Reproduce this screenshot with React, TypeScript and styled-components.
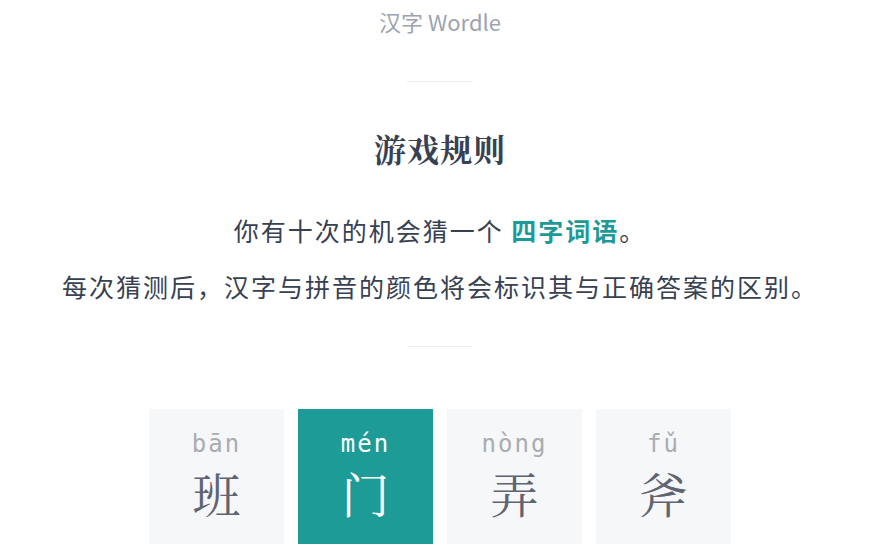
import { createGlobalStyle, styled } from "styled-components";

const GlobalStyle = createGlobalStyle`
  html, body {
    margin: 0;
    padding: 0;
    background: #ffffff;
  }
  body {
    font-family: "Noto Sans", "Noto Sans CJK SC", sans-serif;
  }
`;

const tiles = [
  { pinyin: "bān", hanzi: "班", exact: false },
  { pinyin: "mén", hanzi: "门", exact: true },
  { pinyin: "nòng", hanzi: "弄", exact: false },
  { pinyin: "fǔ", hanzi: "斧", exact: false },
];

export default function App() {
  return (
    <Page>
      <GlobalStyle />
      <Header>汉字 Wordle</Header>
      <Divider />
      <Title>游戏规则</Title>
      <Rule>
        你有十次的机会猜一个 <Highlight>四字词语</Highlight>。
      </Rule>
      <Rule>每次猜测后，汉字与拼音的颜色将会标识其与正确答案的区别。</Rule>
      <Divider $top={32} />
      <TileRow>
        {tiles.map((t) => (
          <Tile key={t.hanzi} $exact={t.exact}>
            <Pinyin $exact={t.exact}>{t.pinyin}</Pinyin>
            <Hanzi $exact={t.exact}>{t.hanzi}</Hanzi>
          </Tile>
        ))}
      </TileRow>
    </Page>
  );
}

const Page = styled.main`
  display: flex;
  flex-direction: column;
  align-items: center;
  width: 880px;
  height: 550px;
  overflow: hidden;
  color: #374151;
`;

const Header = styled.div`
  margin-top: 6px;
  height: 30px;
  line-height: 30px;
  font-size: 22px;
  color: #9ca3af;
  font-family: "Noto Sans CJK SC", sans-serif;
`;

const Divider = styled.hr<{ $top?: number }>`
  width: 66px;
  height: 1px;
  border: 0;
  margin: ${(p) => p.$top ?? 45}px 0 0;
  background: #eceef0;
`;

const Title = styled.h1`
  margin: 46px 0 34px;
  font-family: "Noto Serif CJK SC", "Noto Sans CJK SC", serif;
  font-size: 32px;
  line-height: 40px;
  font-weight: 700;
  letter-spacing: 1px;
  color: #374151;
`;

const Rule = styled.p`
  margin: 0;
  font-family: "Noto Sans CJK SC", sans-serif;
  font-size: 25px;
  line-height: 56px;
  letter-spacing: 2px;
  color: #374151;
`;

const Highlight = styled.b`
  font-weight: 700;
  color: #1d9a95;
`;

const TileRow = styled.div`
  display: flex;
  gap: 14px;
  margin-top: 62px;
`;

const Tile = styled.div<{ $exact: boolean }>`
  display: flex;
  flex-direction: column;
  align-items: center;
  width: 135px;
  height: 135px;
  box-sizing: border-box;
  padding-top: 21px;
  background: ${(p) => (p.$exact ? "#1d9c97" : "#f6f7f9")};
`;

const Pinyin = styled.div<{ $exact: boolean }>`
  font-family: "DejaVu Sans Mono", monospace;
  font-size: 24px;
  line-height: 28px;
  letter-spacing: 2px;
  color: ${(p) => (p.$exact ? "#ffffff" : "#a9acb1")};
`;

const Hanzi = styled.div<{ $exact: boolean }>`
  margin-top: 9px;
  font-family: "Noto Serif CJK SC", "Noto Sans CJK SC", serif;
  font-size: 48px;
  line-height: 52px;
  color: ${(p) => (p.$exact ? "#ffffff" : "#5f6470")};
`;
